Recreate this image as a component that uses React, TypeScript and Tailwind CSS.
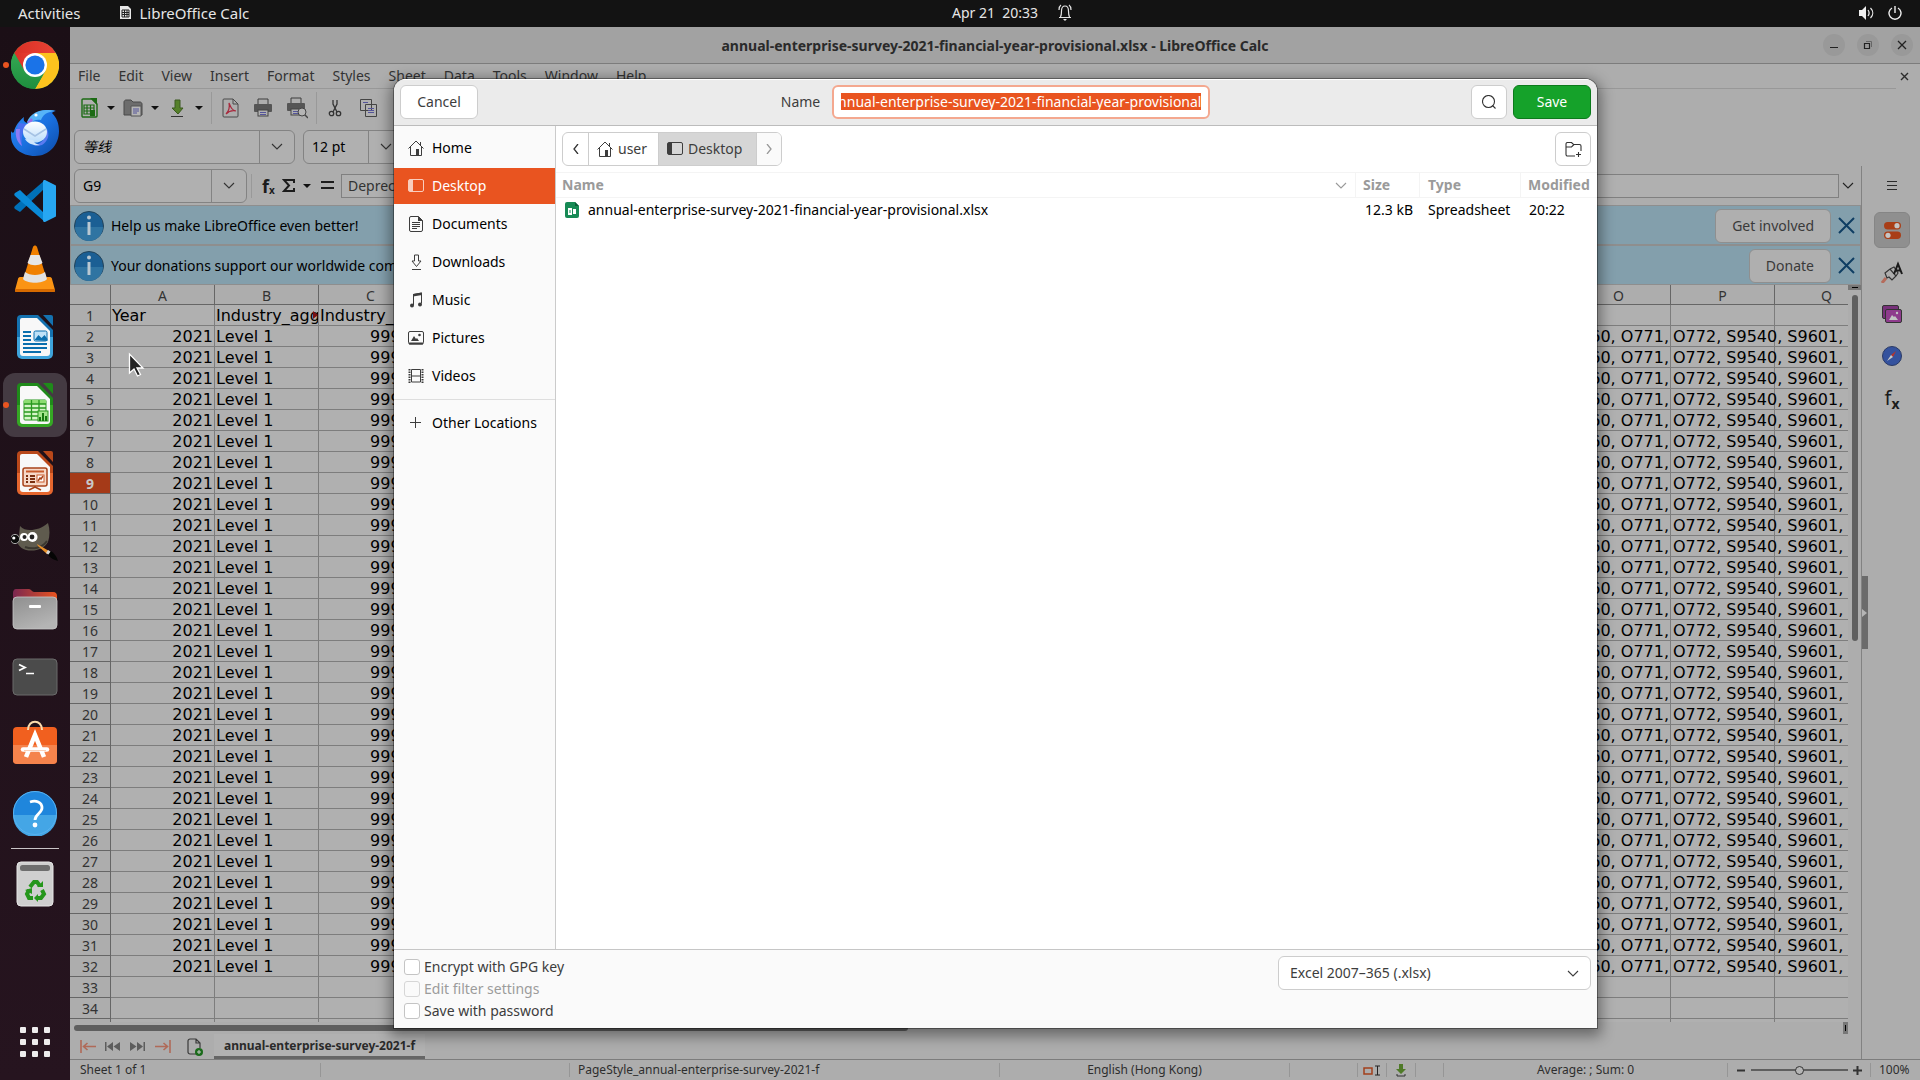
import React, { useEffect, useRef } from 'react';

const FILE_NAME = 'annual-enterprise-survey-2021-financial-year-provisional';

const menus = ['File', 'Edit', 'View', 'Insert', 'Format', 'Styles', 'Sheet', 'Data', 'Tools', 'Window', 'Help'];
const columns = 'ABCDEFGHIJKLMNOPQ'.split('');
const rows = Array.from({ length: 34 }, (_, i) => i + 1);

/* ---------- Dock icons ---------- */

const ChromeIcon = () => (
  <svg width="48" height="48" viewBox="0 0 48 48">
    <defs>
      <linearGradient id="chR" x1="0" y1="0" x2="1" y2="0"><stop offset="0" stopColor="#d93025" /><stop offset="1" stopColor="#ea4335" /></linearGradient>
      <linearGradient id="chG" x1="0" y1="0" x2="0" y2="1"><stop offset="0" stopColor="#34a853" /><stop offset="1" stopColor="#1e8e3e" /></linearGradient>
    </defs>
    <circle cx="24" cy="24" r="24" fill="url(#chG)" />
    <path d="M24 24 3.2 12A24 24 0 0 1 44.8 12z" fill="url(#chR)" />
    <path d="M24 12h20.8A24 24 0 0 1 24 48l10.4-18z" fill="#fcc31e" />
    <path d="M3.2 12 13.6 30 24 24V12z" fill="url(#chR)" />
    <path d="M3.2 12 13.6 30 24 36l8 -2L24 48A24 24 0 0 1 3.2 12z" fill="url(#chG)" />
    <circle cx="24" cy="24" r="12" fill="#fff" />
    <circle cx="24" cy="24" r="9.6" fill="#1a73e8" />
  </svg>
);

const ThunderbirdIcon = () => (
  <svg width="48" height="48" viewBox="0 0 48 48">
    <defs>
      <linearGradient id="tb" x1="0" y1="0" x2="1" y2="1"><stop offset="0" stopColor="#2a8bf2" /><stop offset="0.5" stopColor="#1a71e0" /><stop offset="1" stopColor="#0c4aa8" /></linearGradient>
      <linearGradient id="tbm" x1="0" y1="0" x2="0" y2="1"><stop offset="0" stopColor="#fff" /><stop offset="1" stopColor="#b9dcfb" /></linearGradient>
    </defs>
    <path d="M0 22c1 2 2 2 3 1C4 17 8 12 13 8c-1 3 0 5 3 6C20 6 27 1 36 1c4 0 7 0 9 1-2 0-3 1-4 2 5 5 7 11 7 18 0 14-10 25-24 25S0 38 0 27z" fill="url(#tb)" />
    <path d="M16 13C19 5 27 1 35 1c4 0 7 0 9 1-9 1-12 4-14 9-4-1-8 0-11 4z" fill="#56b4f8" />
    <path d="M8 14c-4 9-3 18 3 23-1-8 0-15 5-22z" fill="#4a6ff0" />
    <path d="M5 20c-1 8 1 13 6 17-2-5-3-10-2-17z" fill="#8d7cf5" />
    <circle cx="25" cy="6" r="1.6" fill="#fff" />
    <path d="M16 13c2-1 3-2 4-4l2 2-3 4z" fill="#9a6ae6" />
    <path d="M36 20c3 6 1 12-5 16-3 1-6 1-9 0 8 0 13-6 14-16z" fill="#5a7bf0" />
    <ellipse cx="24" cy="23" rx="12" ry="10.500" fill="url(#tbm)" />
    <path d="M14 30c3 5 9 7 15 6-5-1-6-3-7-5z" fill="#cfe6fc" />
    <path d="M13 20l11 7 11-7" fill="none" stroke="#a5c2e4" strokeWidth="1.500" />
  </svg>
);

const CodeIcon = () => (
  <svg width="42" height="42" viewBox="0 0 42 42">
    <path d="M31 0l-1 9L6 32 1 29c-1-1-1-2 0-3z" fill="#0070b8" />
    <path d="M31 42l-1-9L6 10l-5 3c-1 1-1 2 0 3z" fill="#0a8ad8" />
    <path d="M31 0l10 5c1 0 1 1 1 2v28c0 1 0 2-1 2l-10 5c-1 0-2 0-2-2V2c0-2 1-2 2-2z" fill="#27a7f2" />
  </svg>
);

const VlcIcon = () => (
  <svg width="42" height="48" viewBox="0 0 42 48">
    <path d="M6 32h30c1 0 2 1 2 2l3 11c0 1 0 2-2 2H3c-2 0-2-1-2-2l3-11c0-1 1-2 2-2z" fill="#fb9414" />
    <path d="M1 44h40v2c0 1-1 1-2 1H3c-1 0-2 0-2-1z" fill="#d66a00" />
    <path d="M9 34C14 20 17 8 19 2c1-2 3-2 4 0 2 6 5 18 10 32-4 5-20 5-24 0z" fill="#f08000" />
    <path d="M16.500 10h9l3 8c-4 3-11 3-15 0z" fill="#e6e6e6" />
    <path d="M11 27c5 4 15 4 20 0l2 7c-4 5-20 5-24 0z" fill="#e2e2e2" />
  </svg>
);

/* Document-shaped LibreOffice icons share the page outline */
const OfficeIcon = ({ id, top, bottom, children }: { id: string; top: string; bottom: string; children: React.ReactNode }) => (
  <svg width="38" height="46" viewBox="0 0 38 46">
    <defs>
      <linearGradient id={id} x1="0" y1="0" x2="0" y2="1"><stop offset="0.5" stopColor={top} /><stop offset="0.51" stopColor={bottom} /></linearGradient>
    </defs>
    <path d="M5 1h17l15 15v24a5 5 0 0 1-5 5H6a5 5 0 0 1-5-5V5a4 4 0 0 1 4-4z" fill={`url(#${id})`} />
    <path d="M6 4h15l13 13v22a3 3 0 0 1-3 3H7a3 3 0 0 1-3-3V6a2 2 0 0 1 2-2z" fill="#f8f8f8" />
    <path d="M27 1h8a2 2 0 0 1 2 2v9z" fill={top} />
    {children}
  </svg>
);

const WriterIcon = () => (
  <OfficeIcon id="wr" top="#1472b0" bottom="#3ea4dc">
    <path d="M7 18h8M7 22h8M7 26h8M7 30h24M7 34h24M7 38h18" stroke="#0b6fae" strokeWidth="2" />
    <rect x="18" y="17" width="13" height="10" rx="1.500" fill="#bfe2f8" stroke="#0b6fae" />
    <path d="M18.500 26l4-5 3 3 3-3 3 4v2z" fill="#0b6fae" />
  </OfficeIcon>
);

const CalcIcon = () => (
  <OfficeIcon id="ca" top="#1f8a1a" bottom="#35a824">
    <rect x="8" y="18" width="22" height="20" rx="1" fill="#d6f5c8" stroke="#28981f" />
    <path d="M8 18h22v4H8z" fill="#8ddc72" />
    <path d="M8 22h22M8 26h22M8 30h22M8 34h22M15.500 18v20M23 18v20" stroke="#28981f" strokeWidth="1.300" />
    <rect x="22" y="29" width="10" height="10" fill="#a4e58c" stroke="#28981f" />
    <path d="M24 39v-4M27 39v-8M30 39v-5" stroke="#167a10" strokeWidth="2" />
  </OfficeIcon>
);

const ImpressIcon = () => (
  <OfficeIcon id="im" top="#b9481a" bottom="#e5662e">
    <rect x="7" y="18" width="24" height="18" rx="2" fill="#f6d9c9" stroke="#a8431a" strokeWidth="1.500" />
    <path d="M10 21.500h18" stroke="#c85a2b" strokeWidth="2" />
    <path d="M10 26h2M10 29h2M10 32h2M14 26h5M14 29h5M14 32h5" stroke="#7a2f10" strokeWidth="2" />
    <rect x="21" y="25" width="7" height="7" fill="#fff" stroke="#c85a2b" />
    <path d="M22 31l2-3 1 1 2-3M19 36v2M19 37l-6 3M19 37l6 3" stroke="#a8431a" strokeWidth="1.500" fill="none" />
  </OfficeIcon>
);

const GimpIcon = () => (
  <svg width="48" height="42" viewBox="0 -3 48 42">
    <path d="M9 3c3 3 6 4 10 4 6 0 12-2 18-7 2 6 2 13 0 19-4 7-13 10-22 8-4-1-6-3-8-6z" fill="#5f5b4e" />
    <path d="M14 24c8 3 17 1 22-6" fill="none" stroke="#3a372f" strokeWidth="2" />
    <circle cx="13" cy="14" r="4" fill="#fff" /><circle cx="13.500" cy="14" r="2" fill="#222" />
    <circle cx="21.500" cy="14" r="5" fill="#fff" /><circle cx="21" cy="14" r="2.400" fill="#222" />
    <circle cx="4" cy="16" r="4.600" fill="#0a0a0a" stroke="#aaa" strokeWidth="1" /><circle cx="2.800" cy="15" r="1.600" fill="#fff" />
    <path d="M26 21l12 7-2 3-9-8z" fill="#e8902a" />
    <path d="M37 27l3 2-2 3-3-2z" fill="#d8d8d8" />
    <path d="M40 28c3 2 6 6 7 10-4-1-8-3-10-6z" fill="#050505" />
  </svg>
);

const FilesIcon = () => (
  <svg width="46" height="42" viewBox="0 0 46 42">
    <defs>
      <linearGradient id="fi" x1="0" x2="1"><stop offset="0" stopColor="#7a2750" /><stop offset="1" stopColor="#e95420" /></linearGradient>
      <linearGradient id="ff" x1="0" y1="0" x2="0.500" y2="1"><stop offset="0" stopColor="#8f8f8f" /><stop offset="1" stopColor="#b4b4b4" /></linearGradient>
    </defs>
    <path d="M4 1h13c2 0 3 3 5 3h19c3 0 4 2 4 4v12H1V5c0-2 1-4 3-4z" fill="url(#fi)" />
    <rect x="1" y="9" width="44" height="32" rx="4" fill="url(#ff)" stroke="#c8c8c8" strokeWidth="0.800" />
    <rect x="17" y="17" width="12" height="3" rx="1" fill="#fff" />
  </svg>
);

const TerminalIcon = () => (
  <svg width="46" height="38" viewBox="0 0 46 38">
    <rect x="1" y="1" width="44" height="36" rx="4" fill="#4b4b4b" stroke="#6b6b6b" />
    <path d="M7 6.500l6 3-6 3" fill="none" stroke="#fff" strokeWidth="1.800" />
    <path d="M14 15.500h8" stroke="#fff" strokeWidth="1.500" />
  </svg>
);

const SoftwareIcon = () => (
  <svg width="46" height="50" viewBox="0 0 46 50">
    <rect x="1" y="7" width="44" height="37" rx="4" fill="#f1601f" />
    <path d="M1 25h44v15a4 4 0 0 1-4 4H5a4 4 0 0 1-4-4z" fill="#f5834c" />
    <path d="M16 10c0-11 14-11 14 0" fill="none" stroke="#fbdcae" strokeWidth="2" />
    <path d="M14 37l9-22 9 22" fill="none" stroke="#fff" strokeWidth="4.500" />
    <path d="M11 29.500h24" stroke="#fff" strokeWidth="4.500" strokeLinecap="round" />
    <path d="M12 30.500h22" stroke="#f9c3a5" strokeWidth="0.800" />
  </svg>
);

const HelpIcon = () => (
  <svg width="46" height="46" viewBox="0 0 46 46">
    <circle cx="23" cy="23" r="22" fill="#1f86dc" />
    <path d="M1 25a22 22 0 0 0 44 0z" fill="#44a6e6" />
    <circle cx="23" cy="23" r="21.500" fill="none" stroke="#59b2ef" />
    <path d="M18 12c6-2 12 0 12 6 0 5-7 6-7 12" fill="none" stroke="#fff" strokeWidth="2.800" />
    <circle cx="23" cy="35" r="2.400" fill="#fff" />
  </svg>
);

const TrashIcon = () => (
  <svg width="38" height="46" viewBox="0 0 38 46">
    <rect x="1" y="1" width="36" height="44" rx="4" fill="#cfcfcf" stroke="#e6e6e6" />
    <rect x="4" y="4" width="30" height="6" rx="2.500" fill="#6e6e6e" />
    <g fill="none" stroke="#25961b" strokeWidth="4">
      <path d="M14 26l4-5h3l3 4" /><path d="M26 29l2 4-3 4h-4" /><path d="M17 37h-4l-2-4 2-4" />
    </g>
    <path d="M21 26h6v-6zM22 33v8l-4-4zM9 29l7-2v6z" fill="#25961b" />
  </svg>
);

const dockItems = [
  { name: 'Google Chrome', icon: ChromeIcon, running: true },
  { name: 'Thunderbird', icon: ThunderbirdIcon },
  { name: 'Visual Studio Code', icon: CodeIcon },
  { name: 'VLC', icon: VlcIcon },
  { name: 'LibreOffice Writer', icon: WriterIcon },
  { name: 'LibreOffice Calc', icon: CalcIcon, running: true, active: true },
  { name: 'LibreOffice Impress', icon: ImpressIcon },
  { name: 'GIMP', icon: GimpIcon },
  { name: 'Files', icon: FilesIcon },
  { name: 'Terminal', icon: TerminalIcon },
  { name: 'Ubuntu Software', icon: SoftwareIcon },
  { name: 'Help', icon: HelpIcon },
];

const DockButton = ({ name, icon: Icon, running, active }: { name: string; icon: () => React.ReactElement; running?: boolean; active?: boolean }) => (
  <button aria-label={name} className="relative h-[68px] w-full flex items-center justify-center shrink-0">
    <span className={`size-16 rounded-xl flex items-center justify-center ${active ? 'bg-[#443a42]' : ''}`}>
      <Icon />
    </span>
    {running && <span className="absolute left-[3px] top-[31px] size-[6px] rounded-full bg-[#e95420]" />}
  </button>
);

const Dock = () => (
  <nav className="w-[70px] shrink-0 bg-linear-to-b from-[#1b0f16] to-[#26141f] flex flex-col pt-1">
    {dockItems.map((item) => <DockButton key={item.name} {...item} />)}
    <div className="h-px my-px mx-[11px] bg-[#c9c5c7] shrink-0" />
    <DockButton name="Trash" icon={TrashIcon} />
    <button aria-label="Show Applications" className="mt-auto mb-[23px] mx-auto grid grid-cols-3 gap-[6px]">
      {Array.from({ length: 9 }, (_, i) => <span key={i} className="size-[6px] rounded-[1px] bg-[#eeeced]" />)}
    </button>
  </nav>
);

/* ---------- Top bar ---------- */

const TopBar = () => (
  <header className="h-[27px] shrink-0 bg-[#131313] text-[#e6e6e6] text-sm leading-6 grid grid-cols-[1fr_auto_1fr] items-center pb-[2px]">
    <div className="flex items-center text-[15px] leading-6">
      <button className="pl-[18px]">Activities</button>
      <button className="ml-[38px] flex items-center gap-2">
        <svg width="13" height="15" viewBox="0 0 13 15">
          <path d="M1 1h8l3 3v10H1z" fill="#e8e8e8" />
          <path d="M3 5h7v7H3zM3 7.500h7M3 9.500h7M5.500 5v7M8 5v7" fill="none" stroke="#222" />
        </svg>
        LibreOffice Calc
      </button>
    </div>
    <button className="pl-[104px] flex items-center gap-5">
      <span className="whitespace-pre">Apr 21  20:33</span>
      <svg width="14" height="17" viewBox="0 0 14 17" fill="none" stroke="#e6e6e6" strokeWidth="1.200">
        <path d="M1 13.500h12M2.500 13c1-2 1-4 1-6 0-3 1-5 3.500-5s3.500 2 3.500 5c0 2 0 4 1 6M1 6c0-2 .5-4 2-5M13 6c0-2-.5-4-2-5" />
        <path d="M5 15h4l-2 2z" fill="#e6e6e6" stroke="none" />
      </svg>
    </button>
    <div className="flex justify-end items-center gap-[14px] pr-[18px]">
      <svg width="15" height="14" viewBox="0 0 15 14" fill="none" stroke="#eee" strokeWidth="1.200">
        <path d="M0 4h3l4-4v14l-4-4H0z" fill="#eee" stroke="none" />
        <path d="M9 4c1.500 2 1.500 4 0 6M11.500 2c3 3 3 7 0 10" />
      </svg>
      <svg width="14" height="14" viewBox="0 0 14 14" fill="none" stroke="#eee" strokeWidth="1.400">
        <path d="M4 2a6 6 0 1 0 6 0M7 0v7" />
      </svg>
    </div>
  </header>
);

/* ---------- Calc window ---------- */

const Chevron = ({ className = '' }: { className?: string }) => (
  <svg className={className} width="12" height="7" viewBox="0 0 12 7" fill="none" stroke="currentColor" strokeWidth="1.100">
    <path d="M1 1l5 5 5-5" />
  </svg>
);

const Caret = () => (
  <svg width="8" height="4" viewBox="0 0 8 4"><path d="M0 0h8L4 4z" fill="#111" /></svg>
);

const PrinterShape = () => (
  <>
    <path d="M5 6V1h10v5" fill="none" stroke="#3c3c3c" />
    <rect x="1" y="6" width="18" height="8" rx="1" fill="#555" />
    <rect x="5" y="12" width="10" height="6" fill="#b0b0b0" stroke="#444" />
    <path d="M7 14.500h6M7 16.500h6" stroke="#55559a" />
  </>
);

const TitleBar = () => (
  <div className="h-[37px] shrink-0 bg-[#a2a2a2] border-b border-[#7c7c7c] grid grid-cols-[1fr_auto_1fr] items-center">
    <span />
    <h1 className="pt-[2px] font-bold text-sm text-[#2a2a2a]">{FILE_NAME}.xlsx - LibreOffice Calc</h1>
    <div className="flex justify-end gap-3 pr-[7px] text-[#222]">
      <button aria-label="Minimize" className="size-[22px] rounded-full bg-[#999] flex items-center justify-center">
        <svg width="10" height="10" viewBox="0 0 10 10"><path d="M1 7.500h8" stroke="currentColor" /></svg>
      </button>
      <button aria-label="Restore" className="size-[22px] rounded-full bg-[#999] flex items-center justify-center">
        <svg width="10" height="10" viewBox="0 0 10 10" fill="none">
          <path d="M1.500 3.500h5v5h-5z" stroke="currentColor" strokeWidth="1.200" /><path d="M3 1.500h5.500V7" stroke="#666" />
        </svg>
      </button>
      <button aria-label="Close" className="size-[22px] rounded-full bg-[#999] flex items-center justify-center">
        <svg width="10" height="10" viewBox="0 0 10 10"><path d="M1 1l8 8M9 1L1 9" stroke="currentColor" strokeWidth="1.300" /></svg>
      </button>
    </div>
  </div>
);

const MenuBar = () => (
  <div className="h-[25px] shrink-0 flex items-stretch">
    <div className="flex-1 flex items-center gap-[2px] border-b border-[#989898] text-sm text-[#333]">
      {menus.map((menu) => <button key={menu} className="px-2">{menu}</button>)}
    </div>
    <button aria-label="Close document" className="w-6 flex items-center pl-1">
      <svg width="9" height="9" viewBox="0 0 9 9"><path d="M1 1l7 7M8 1L1 8" stroke="#2b2b2b" strokeWidth="1.400" /></svg>
    </button>
  </div>
);

const Toolbar = () => (
  <div className="h-[38px] shrink-0 flex items-center pl-[9px]">
    <div className="flex items-center gap-2">
      <button aria-label="New">
        <svg width="20" height="20" viewBox="0 0 20 20">
          <path d="M4 1h9l5 5v12a1 1 0 0 1-1 1H4a1 1 0 0 1-1-1V2a1 1 0 0 1 1-1z" fill="#b0b0b0" stroke="#1c6b14" strokeWidth="1.400" />
          <path d="M11 0h7v7z" fill="#1c6b14" />
          <path d="M5 7h10v9H5zM5 10h10M5 13h10M8 7v9M11.500 7v9" fill="none" stroke="#1c6b14" strokeWidth="1.200" />
          <path d="M11 12h5v6h-5z" fill="#1c6b14" />
        </svg>
      </button>
      <button aria-label="New options"><Caret /></button>
      <button aria-label="Open">
        <svg width="20" height="20" viewBox="0 0 20 20">
          <path d="M1 17V4c0-1 1-2 2-2h5l2 2h7c1 0 2 1 2 2v11z" fill="#6c6c6c" stroke="#484848" />
          <path d="M8 8h10v10H8z" fill="#b5b5b5" stroke="#555" />
          <path d="M10 11h6M10 13h6M10 15h4" stroke="#55559a" />
        </svg>
      </button>
      <button aria-label="Open options"><Caret /></button>
      <button aria-label="Save">
        <svg width="20" height="20" viewBox="0 0 20 20">
          <path d="M8 2h5v8h3l-5 6-6-6h3z" fill="#55802a" stroke="#3c5a20" />
          <path d="M4 18.500h12" stroke="#333" />
        </svg>
      </button>
      <button aria-label="Save options"><Caret /></button>
    </div>
    <div className="w-px h-8 bg-[#999] mx-2" />
    <div className="flex items-center gap-[13px]">
      <button aria-label="Export as PDF">
        <svg width="20" height="20" viewBox="0 0 20 20" fill="none">
          <path d="M4 1h9l5 5v12a1 1 0 0 1-1 1H4a1 1 0 0 1-1-1V2a1 1 0 0 1 1-1zM13 1v5h5" stroke="#4a4a4a" />
          <path d="M9 5c2 5 3 7 7 8-4-1-7 0-10 3 3-3 4-6 3-11z" stroke="#a8283c" strokeWidth="1.200" />
        </svg>
      </button>
      <button aria-label="Print"><svg width="20" height="20" viewBox="0 0 20 20"><PrinterShape /></svg></button>
      <button aria-label="Print Preview">
        <svg width="22" height="22" viewBox="0 0 22 22">
          <PrinterShape />
          <circle cx="16" cy="15" r="4" fill="#b5b5b5" stroke="#444" /><path d="M19 18l3 3" stroke="#444" strokeWidth="1.400" />
        </svg>
      </button>
    </div>
    <div className="w-px h-8 bg-[#999] mx-2" />
    <div className="flex items-center gap-[13px]">
      <button aria-label="Cut">
        <svg width="20" height="20" viewBox="0 0 20 20" fill="none" stroke="#333" strokeWidth="1.300">
          <path d="M8 2v4l4 8M12 2v4l-4 8" /><circle cx="6.500" cy="15.500" r="2.200" /><circle cx="13.500" cy="15.500" r="2.200" />
        </svg>
      </button>
      <button aria-label="Copy">
        <svg width="20" height="20" viewBox="0 0 20 20" fill="#b0b0b0" stroke="#444">
          <path d="M2.500 1.500h11v11h-11zM7.500 6.500h11v12h-11z" />
          <path d="M10 10.500h6M10 12.500h6M10 14.500h6M5 4.500h5" stroke="#55559a" />
        </svg>
      </button>
    </div>
  </div>
);

const ComboBox = ({ label, value, className }: { label: string; value: string; className: string }) => (
  <div className={`h-[34px] flex border border-[#838383] rounded-md bg-[#b0b0b0] text-sm text-black ${className}`}>
    <input aria-label={label} defaultValue={value} className="flex-1 min-w-0 pl-2 outline-none" />
    <button aria-label={`${label} list`} className="w-[35px] border-l border-[#838383] flex items-center justify-center text-[#333]">
      <Chevron />
    </button>
  </div>
);

const FormulaBar = () => (
  <div className="h-[39px] shrink-0 flex items-center pl-1">
    <ComboBox label="Name Box" value="G9" className="w-[173px]" />
    <div className="w-px h-6 bg-[#999] ml-1 mr-[10px]" />
    <button aria-label="Function Wizard" className="w-4 flex items-end font-bold text-[#1c1c1c]">
      <span className="text-lg leading-5">f</span>
      <span className="text-[10px] leading-3">x</span>
    </button>
    <button aria-label="Select Function" className="ml-1 flex items-center gap-2">
      <svg width="13" height="13" viewBox="0 0 13 13"><path d="M12 4V1H2l5 5.500L2 12h10V9" fill="none" stroke="#1c1c1c" strokeWidth="2" /></svg>
      <Caret />
    </button>
    <button aria-label="Formula" className="ml-[10px] mr-[7px]">
      <svg width="13" height="9" viewBox="0 0 13 9"><path d="M0 1h13M0 7h13" stroke="#1c1c1c" strokeWidth="2" /></svg>
    </button>
    <input aria-label="Input line" defaultValue="Depreciation" className="h-6 flex-1 min-w-0 border border-[#808080] bg-[#b0b0b0] px-[6px] text-sm text-[#333]" />
    <button aria-label="Expand Formula Bar" className="w-[22px] flex items-center pl-[3px] text-[#222]"><Chevron /></button>
  </div>
);

const InfoBar = ({ text, action }: { text: string; action: string }) => (
  <div className="h-10 shrink-0 flex items-center bg-[#839fac] border border-[#8e8e8e] pt-px pl-[3px] pr-[5px] text-sm">
    <svg width="30" height="30" viewBox="0 0 30 30">
      <circle cx="15" cy="15" r="14.500" fill="#1b5f94" stroke="#24445a" />
      <path d="M1 16a14 14 0 0 0 28 0z" fill="#2f74a2" />
      <path d="M15 11v13" stroke="#b9c8d2" strokeWidth="3" /><circle cx="15" cy="6.500" r="2" fill="#b9c8d2" />
    </svg>
    <span className="ml-[7px] flex-1 text-black">{text}</span>
    <button className="h-[34px] px-4 rounded-md bg-[#afafaf] border border-[#8f8f8f] text-[#3a3a3a]">{action}</button>
    <button aria-label="Close infobar" className="ml-[7px]">
      <svg width="17" height="17" viewBox="0 0 17 17"><path d="M1 1l15 15M16 1L1 16" stroke="#0f3e63" strokeWidth="2" /></svg>
    </button>
  </div>
);

const cellContent = (col: string, row: number) => {
  if (row === 1) {
    if (col === 'A') return 'Year';
    if (col === 'B') return 'Industry_aggregation_NZSIOC';
    if (col === 'C') return 'Industry_code_NZSIOC';
    return '';
  }
  if (row > 32) return '';
  if (col === 'A') return '2021';
  if (col === 'B') return 'Level 1';
  if (col === 'C') return '99999';
  if (col === 'O') return '60, O771,';
  if (col === 'P') return 'O772, S9540, S9601, S9602';
  return '';
};

const cellAlign = (col: string, row: number) => {
  if (col === 'P') return 'pl-[2px]';
  if (row > 1 && (col === 'A' || col === 'C' || col === 'O')) return 'text-right overflow-hidden pr-px';
  return 'overflow-hidden pl-px';
};

const Sheet = () => (
  <div className="flex-1 min-w-0 overflow-hidden bg-[#b0b0b0]">
    <table className="w-[1809px] table-fixed border-separate border-spacing-0">
      <thead>
        <tr className="h-5 text-sm text-[#333]">
          <th className="w-[41px] bg-[#adadad] border-r border-b border-[#666]" aria-label="Select all" />
          {columns.map((col) => (
            <th key={col} scope="col" className="w-[104px] p-0 font-normal bg-[#adadad] border-r border-b border-[#666]">
              <div className="h-[19px] leading-[21px]">{col}</div>
            </th>
          ))}
        </tr>
      </thead>
      <tbody>
        {rows.map((row) => (
          <tr key={row} className="h-[21px]">
            <th
              scope="row"
              className={`p-0 text-sm border-r border-b border-[#666] ${
                row === 9 ? 'bg-[#a53a18] text-[#c8c8c8] font-bold' : 'bg-[#adadad] text-[#333] font-normal'
              }`}
            >
              <div className="h-5 leading-[22px]">{row}</div>
            </th>
            {columns.map((col) => (
              <td key={col} className="p-0 border-r border-b border-[#7d7d7d] text-black text-base whitespace-nowrap font-['DejaVu_Sans',sans-serif]">
                <div className={`h-5 leading-[22px] ${cellAlign(col, row)} ${col === 'B' && row === 1 ? 'relative' : ''}`}>
                  {cellContent(col, row)}
                  {col === 'B' && row === 1 && (
                    <svg className="absolute right-0 top-[6px]" width="5" height="8" viewBox="0 0 5 8"><path d="M0 0l5 4-5 4z" fill="#7a1010" /></svg>
                  )}
                </div>
              </td>
            ))}
          </tr>
        ))}
        <tr className="h-4" aria-hidden="true">
          <th className="border-r border-[#666] bg-[#adadad]" />
          {columns.map((col) => <td key={col} className="border-r border-[#7d7d7d]" />)}
        </tr>
      </tbody>
    </table>
  </div>
);

const SheetTabs = () => (
  <div className="h-[25px] shrink-0 flex items-stretch">
    <div className="flex items-center gap-[9px] pl-[10px]">
      <button aria-label="First sheet"><svg width="16" height="13" viewBox="0 0 16 13" fill="none" stroke="#b06a58" strokeWidth="1.600"><path d="M1 0v13M16 6.500H4M7.500 3l-4 3.500 4 3.500" /></svg></button>
      <button aria-label="Previous sheet" className="w-4"><svg width="15" height="9" viewBox="0 0 15 9" fill="#5c5c5c"><path d="M0 0h1.500v9H0zM8 0v9L2 4.500zM15 0v9L8.500 4.500z" /></svg></button>
      <button aria-label="Next sheet" className="w-4"><svg width="15" height="9" viewBox="0 0 15 9" fill="#5c5c5c"><path d="M13.500 0H15v9h-1.500zM0 0l6.500 4.500L0 9zM7 0l6 4.500L7 9z" /></svg></button>
      <button aria-label="Last sheet"><svg width="16" height="13" viewBox="0 0 16 13" fill="none" stroke="#b06a58" strokeWidth="1.600"><path d="M15 0v13M0 6.500h12M8.500 3l4 3.500-4 3.500" /></svg></button>
    </div>
    <button aria-label="Insert sheet" className="ml-4 mr-[11px]">
      <svg width="16" height="18" viewBox="0 0 16 18" fill="none">
        <path d="M9 16H3a2 2 0 0 1-2-2V3a2 2 0 0 1 2-2h6l4 4v5M9 1v4h4" stroke="#3a3a3a" strokeWidth="1.200" />
        <circle cx="12" cy="14" r="4" fill="#1a6b1a" /><path d="M12 12v4M10 14h4" stroke="#c8c8c8" />
      </svg>
    </button>
    <button className="px-[10px] pt-[2px] border-b-[3px] border-[#666] bg-[#b1b1b1] font-bold text-xs text-[#2a2a2a]">annual-enterprise-survey-2021-f</button>
  </div>
);

const SideBar = () => (
  <aside className="w-[59px] shrink-0 border-l border-[#828282] flex items-start">
    <button aria-label="Hide sidebar" className="self-center h-[73px] w-[6px] bg-[#6b6b6b] flex items-center">
      <svg width="5" height="8" viewBox="0 0 5 8"><path d="M0 0l5 4-5 4z" fill="#b5b5b5" /></svg>
    </button>
    <div className="flex-1 flex flex-col items-center gap-[6px] pr-1">
      <button aria-label="Sidebar settings" className="w-9 h-10 flex items-center justify-center">
        <svg width="10" height="10" viewBox="0 0 10 10"><path d="M0 .5h10M0 4.500h10M0 8.500h10" stroke="#2b2b2b" /></svg>
      </button>
      <button aria-label="Properties" className="size-9 rounded-md bg-[#8f8f8f] border border-[#858585] flex items-center justify-center">
        <svg width="17" height="17" viewBox="0 0 17 17">
          <rect x="0" y="0" width="17" height="7.500" rx="3.700" fill="#a93e17" /><circle cx="13" cy="3.700" r="2.600" fill="#c5c5c5" />
          <rect x="0" y="9.500" width="17" height="7.500" rx="3.700" fill="#a93e17" /><circle cx="4" cy="13.300" r="2.600" fill="#c5c5c5" />
        </svg>
      </button>
      <button aria-label="Styles" className="size-9 flex items-center justify-center">
        <svg width="22" height="22" viewBox="0 -2 22 22" fill="none">
          <path d="M1 20l4-5" stroke="#b56c5c" strokeWidth="3" />
          <path d="M4 10l5-4 6 7-4 4-3-3-2 1zM9 6l4-2 4 6-2 3" stroke="#333" strokeWidth="1.200" />
          <path d="M13 11l4-10 4 10M14 7.500h6" stroke="#1b1b1b" strokeWidth="2" />
        </svg>
      </button>
      <button aria-label="Gallery" className="size-9 flex items-center justify-center">
        <svg width="20" height="18" viewBox="0 0 20 18">
          <rect x="0.500" y="0.500" width="16" height="13" rx="1.500" fill="#77317a" stroke="#333" />
          <rect x="3.500" y="4.500" width="16" height="13" rx="1.500" fill="#8e3b8c" stroke="#333" />
          <path d="M7 15l3-5 2 2 1-1 3 4z" fill="#c3c3c3" /><circle cx="15" cy="8" r="1.200" fill="#c3c3c3" />
        </svg>
      </button>
      <button aria-label="Navigator" className="size-9 flex items-center justify-center">
        <svg width="20" height="20" viewBox="0 0 20 20">
          <circle cx="10" cy="10" r="9.500" fill="#34529e" stroke="#2a3a66" />
          <path d="M14 5L9 9l2 2z" fill="#b5342c" /><path d="M5 15l4-6 2 2z" fill="#c9c9c9" />
        </svg>
      </button>
      <button aria-label="Functions" className="size-9 flex items-center justify-center text-[#1c1c1c]">
        <span className="text-xl leading-5">f</span>
        <span className="self-end pb-[6px] text-sm leading-3 font-bold">x</span>
      </button>
    </div>
  </aside>
);

const StatusBar = () => (
  <footer className="h-[21px] shrink-0 border-t border-[#7c7c7c] py-[3px] flex text-xs leading-[14px] text-[#2e2e2e] *:border-r *:border-[#969696] *:flex *:items-center">
    <div className="w-[251px] pl-[10px]">Sheet 1 of 1</div>
    <div className="w-[249px]" />
    <div className="flex-1 pl-2">PageStyle_annual-enterprise-survey-2021-f</div>
    <div className="w-[290px] justify-center">English (Hong Kong)</div>
    <div className="w-[68px]" />
    <div className="w-[29px] justify-center">
      <svg width="18" height="11" viewBox="0 0 18 11" fill="none"><path d="M1 3h8v6H1z" stroke="#a3401c" strokeWidth="1.500" /><path d="M12 1h5M12 10h5M14.500 1v9" stroke="#222" /></svg>
    </div>
    <div className="w-[29px] justify-center">
      <svg width="10" height="13" viewBox="0 0 10 13"><path d="M3 0h4v5h3l-5 5-5-5h3z" fill="#4f7a28" /><path d="M1 10v2h8v-2" fill="none" stroke="#333" /></svg>
    </div>
    <div className="w-[28px]" />
    <div className="w-[284px] justify-center">Average: ; Sum: 0</div>
    <div className="w-[143px] justify-center gap-[5px]">
      <button aria-label="Zoom out"><svg width="9" height="9" viewBox="0 0 9 9"><path d="M0 4.500h8" stroke="#333" strokeWidth="2" /></svg></button>
      <input
        type="range"
        aria-label="Zoom"
        defaultValue="50"
        className="w-[97px] h-[2px] appearance-none bg-[#5f5f5f] [&::-webkit-slider-thumb]:appearance-none [&::-webkit-slider-thumb]:size-[9px] [&::-webkit-slider-thumb]:rounded-full [&::-webkit-slider-thumb]:border [&::-webkit-slider-thumb]:border-[#333] [&::-webkit-slider-thumb]:bg-[#b5b5b5]"
      />
      <button aria-label="Zoom in"><svg width="9" height="9" viewBox="0 0 9 9"><path d="M0 4.500h9M4.500 0v9" stroke="#333" strokeWidth="2" /></svg></button>
    </div>
    <div className="w-[49px] pl-2 border-r-0!">100%</div>
  </footer>
);

/* ---------- Save dialog ---------- */

const HomeIcon = () => (
  <svg width="16" height="16" viewBox="0 0 16 16" fill="none" stroke="currentColor">
    <path d="M.5 8.500L8 1l7.500 7.500M2.500 7v8.500h11V7M12.500 5.500V2" /><path d="M8 9h3v6.500H8z" fill="currentColor" stroke="none" />
  </svg>
);
const DesktopIcon = () => (
  <svg width="16" height="14" viewBox="0 0 16 14" fill="none" stroke="currentColor">
    <rect x="0.500" y="0.500" width="15" height="12" rx="1.500" /><path d="M1 1h4v11H1z" fill="currentColor" stroke="none" />
  </svg>
);
const DocumentsIcon = () => (
  <svg width="16" height="16" viewBox="0 0 16 16" fill="none" stroke="currentColor">
    <path d="M10.500.5H3A1.500 1.500 0 0 0 1.500 2v12A1.500 1.500 0 0 0 3 15.500h10a1.500 1.500 0 0 0 1.500-1.500V4.500z" />
    <path d="M10 0l5 5h-5z" fill="currentColor" stroke="none" /><path d="M4 6.500h8M4 8.500h8M4 10.500h8M4 12.500h5" />
  </svg>
);
const DownloadsIcon = () => (
  <svg width="16" height="16" viewBox="0 0 16 16" fill="none" stroke="currentColor">
    <path d="M6.500 1h4v6h2.500l-4.500 5.500L4 7h2.500zM4 15.500h9" />
  </svg>
);
const MusicIcon = () => (
  <svg width="16" height="16" viewBox="0 0 16 16" fill="none" stroke="currentColor">
    <path d="M5.500 13V2.500l8-1.500v10.500" /><path d="M5 2l9-1.500V3L5 4.500z" fill="currentColor" stroke="none" />
    <circle cx="4" cy="13.500" r="2" fill="currentColor" stroke="none" /><circle cx="12" cy="12.500" r="2" fill="currentColor" stroke="none" />
  </svg>
);
const PicturesIcon = () => (
  <svg width="16" height="14" viewBox="0 0 16 14" fill="none" stroke="currentColor">
    <rect x="0.500" y="0.500" width="15" height="12.500" rx="1.500" />
    <path d="M3 10l3-5 2 3 1-1 2 3z" fill="currentColor" stroke="none" /><circle cx="11.500" cy="4" r="1.300" fill="currentColor" stroke="none" />
    <path d="M1 12.500h14" strokeWidth="2" />
  </svg>
);
const VideosIcon = () => (
  <svg width="16" height="14" viewBox="0 0 16 14" fill="none" stroke="currentColor">
    <path d="M3.500.5h9v12.500h-9zM3.500 7h9" /><path d="M1.500 0v14M14.500 0v14" strokeWidth="2" strokeDasharray="1.500 1" />
  </svg>
);

const places = [
  { name: 'Home', icon: HomeIcon },
  { name: 'Desktop', icon: DesktopIcon, selected: true },
  { name: 'Documents', icon: DocumentsIcon },
  { name: 'Downloads', icon: DownloadsIcon },
  { name: 'Music', icon: MusicIcon },
  { name: 'Pictures', icon: PicturesIcon },
  { name: 'Videos', icon: VideosIcon },
];

const options = [
  { id: 'encrypt', label: 'Encrypt with GPG key' },
  { id: 'filter', label: 'Edit filter settings', disabled: true },
  { id: 'password', label: 'Save with password' },
];

const SaveDialog = () => {
  const nameRef = useRef<HTMLInputElement>(null);

  // keep the end of a long file name in view
  useEffect(() => {
    if (nameRef.current) nameRef.current.scrollLeft = nameRef.current.scrollWidth;
  }, []);

  return (
    <div
      role="dialog"
      aria-label="Save"
      className="absolute left-[324px] right-[323px] top-[52px] bottom-[52px] flex flex-col bg-white rounded-t-xl overflow-hidden text-sm text-[#3d3d3d] shadow-[0_0_0_1px_rgba(0,0,0,0.35),0_4px_14px_4px_rgba(0,0,0,0.4)]"
    >
      <div className="h-[47px] shrink-0 bg-[#ebebeb] border-t border-b border-t-white border-b-[#bcbcbc] grid grid-cols-[1fr_auto_1fr] items-center px-[6px] pb-[2px]">
        <button className="w-[78px] h-[34px] bg-white border border-[#cdcdcd] rounded-md">Cancel</button>
        <div className="flex items-center gap-3">
          <label htmlFor="file-name">Name</label>
          <div className="w-[378px] h-[34px] bg-white border-2 border-[#f4a88f] rounded-md flex items-center px-[7px]">
            <input id="file-name" ref={nameRef} defaultValue={FILE_NAME} className="w-full h-[17px] bg-[#e95420] text-white outline-none" />
          </div>
        </div>
        <div className="flex items-center justify-end gap-[6px]">
          <button aria-label="Search" className="w-9 h-[34px] bg-white border border-[#cdcdcd] rounded-md flex items-center justify-center">
            <svg width="14" height="14" viewBox="0 0 14 14" fill="none" stroke="#333" strokeWidth="1.100"><circle cx="6.500" cy="6.500" r="6" /><path d="M10.500 10.500l3 3" /></svg>
          </button>
          <button className="w-[78px] h-[34px] bg-[#15a22a] border border-[#0c7a1c] rounded-md text-white">Save</button>
        </div>
      </div>

      <div className="flex-1 min-h-0 flex">
        <nav className="w-[162px] shrink-0 bg-[#fafafa] border-r border-[#cbcbcb] pt-1 text-black">
          <ul className="flex flex-col gap-[2px]">
            {places.map(({ name, icon: Icon, selected }) => (
              <li key={name}>
                <a href="#" className={`h-9 flex items-center gap-2 pl-[14px] ${selected ? 'bg-[#e95420] text-white' : ''}`}>
                  <span className={selected ? 'text-[#f9cdbd]' : 'text-[#3d3d3d]'}><Icon /></span>
                  {name}
                </a>
              </li>
            ))}
          </ul>
          <div className="h-px bg-[#dedede] mt-[5px] mb-[5px]" />
          <a href="#" className="h-9 flex items-center gap-2 pl-[14px]">
            <svg width="16" height="16" viewBox="0 0 16 16" stroke="#3d3d3d"><path d="M2 7.500h11M7.500 2v11" /></svg>
            Other Locations
          </a>
        </nav>

        <div className="flex-1 min-w-0 flex flex-col">
          <div className="h-[46px] shrink-0 flex items-center justify-between pl-[6px] pr-[6px]">
            <div className="h-[34px] flex border border-[#cdcdcd] rounded-md overflow-hidden *:flex *:items-center">
              <button aria-label="Back" className="w-[26px] justify-center border-r border-[#cdcdcd]">
                <svg width="6" height="10" viewBox="0 0 6 10" fill="none" stroke="#333" strokeWidth="1.300"><path d="M5 0L1 5l4 5" /></svg>
              </button>
              <button className="w-[70px] gap-[5px] pl-2 border-r border-[#cdcdcd]"><HomeIcon />user</button>
              <button className="w-[98px] gap-[5px] pl-2 bg-[#d6d6d6] border-r border-[#cdcdcd]"><DesktopIcon />Desktop</button>
              <button aria-label="Forward" className="w-6 justify-center bg-[#fafafa]">
                <svg width="6" height="10" viewBox="0 0 6 10" fill="none" stroke="#999" strokeWidth="1.300"><path d="M1 0l4 5-4 5" /></svg>
              </button>
            </div>
            <button aria-label="Create Folder" className="w-9 h-[34px] border border-[#cdcdcd] rounded-md flex items-center justify-center">
              <svg width="17" height="15" viewBox="0 0 17 15" fill="none" stroke="#333" strokeWidth="1.100">
                <path d="M10 14H2.500A1.500 1.500 0 0 1 1 12.500V2A1.500 1.500 0 0 1 2.500.5h4l2 2h6A1.500 1.500 0 0 1 16 4v5M1 5h5.500L9 2.500M13.500 10v5M11 12.500h5" />
              </svg>
            </button>
          </div>
          <table className="w-full table-fixed border-separate border-spacing-0">
            <thead>
              <tr className="h-[26px] text-left text-[#9a9a9a] *:font-bold *:border-y *:border-[#f4f4f4]">
                <th className="p-0 pl-[6px] border-r">
                  <div className="flex items-center justify-between pr-2">Name<Chevron /></div>
                </th>
                <th className="w-16 p-0 pl-[7px] border-r">Size</th>
                <th className="w-[101px] p-0 pl-2 border-r">Type</th>
                <th className="w-[76px] p-0 pl-[7px]">Modified</th>
              </tr>
            </thead>
            <tbody>
              <tr className="h-6 text-black">
                <td className="p-0 pl-[9px]">
                  <div className="flex items-center gap-[9px]">
                    <svg width="14" height="16" viewBox="0 0 14 16">
                      <path d="M2 0h8l4 4v10a2 2 0 0 1-2 2H2a2 2 0 0 1-2-2V2a2 2 0 0 1 2-2z" fill="#178a55" />
                      <path d="M10 0l4 4h-4z" fill="#0b5c37" />
                      <path d="M3 6h4v7H3zM8 7h3v5H8z" fill="#fff" /><path d="M4.500 8h1v3h-1z" fill="#178a55" />
                    </svg>
                    {FILE_NAME}.xlsx
                  </div>
                </td>
                <td className="p-0 pr-[7px] text-right">12.3 kB</td>
                <td className="p-0 pl-2">Spreadsheet</td>
                <td className="p-0 pl-2">20:22</td>
              </tr>
            </tbody>
          </table>
        </div>
      </div>

      <div className="h-[79px] shrink-0 bg-[#fafafa] border-t border-[#c6c6c6] flex items-start justify-between pl-[10px] pr-[6px] pt-[6px]">
        <div className="flex flex-col">
          {options.map((option) => (
            <div key={option.id} className="h-[22px] flex items-center gap-1">
              <input
                id={option.id}
                type="checkbox"
                disabled={option.disabled}
                className="size-4 appearance-none bg-white border border-[#c4c4c4] rounded-[3px] disabled:border-[#d6d6d6] disabled:bg-[#fafafa]"
              />
              <label htmlFor={option.id} className={option.disabled ? 'text-[#9c9c9c]' : ''}>{option.label}</label>
            </div>
          ))}
        </div>
        <div className="relative">
          <select aria-label="File type" className="w-[313px] h-[34px] appearance-none bg-white border border-[#cdcdcd] rounded-md pl-[11px]">
            <option>Excel 2007–365 (.xlsx)</option>
          </select>
          <Chevron className="absolute right-3 top-[14px] pointer-events-none" />
        </div>
      </div>
    </div>
  );
};

export default function App() {
  return (
    <div className="h-screen flex flex-col overflow-hidden bg-[#131313] font-['Noto_Sans','Noto_Sans_CJK_SC',sans-serif]">
      <TopBar />
      <div className="flex-1 min-h-0 flex">
        <Dock />
        <main className="relative flex-1 min-w-0 flex flex-col bg-[#adadad]">
          <TitleBar />
          <MenuBar />
          <Toolbar />
          <div className="h-[39px] shrink-0 flex items-center gap-2 pl-1">
            <ComboBox label="Font Name" value="等线" className="w-[221px] italic" />
            <ComboBox label="Font Size" value="12 pt" className="w-[101px]" />
          </div>
          <div className="flex-1 min-h-0 flex">
            <div className="flex-1 min-w-0 flex flex-col">
              <FormulaBar />
              <InfoBar text="Help us make LibreOffice even better!" action="Get involved" />
              <InfoBar text="Your donations support our worldwide community." action="Donate" />
              <div className="flex-1 min-h-0 flex">
                <Sheet />
                <div className="w-[13px] shrink-0 flex flex-col items-center">
                  <div className="w-full h-[5px] bg-[#777] flex items-center justify-center"><span className="w-[6px] h-px bg-black" /></div>
                  <div className="mt-[5px] w-[6px] h-[47%] rounded-full bg-[#5f5f5f]" />
                </div>
              </div>
              <div className="h-3 shrink-0 flex items-center justify-between pl-1 pr-[13px]">
                <div className="w-[47%] h-[6px] rounded-full bg-[#5f5f5f]" />
                <div className="w-[5px] h-3 bg-[#777] flex items-center justify-center"><span className="w-px h-[6px] bg-black" /></div>
              </div>
              <SheetTabs />
            </div>
            <SideBar />
          </div>
          <StatusBar />
          <SaveDialog />
          {/* Mouse pointer */}
          <svg className="absolute left-[58px] top-[325px]" width="18" height="26" viewBox="0 0 18 26">
            <path d="M1.500 2v19l4.500-4 3.500 7 3-1.500-3.500-6.500h6z" fill="#222" stroke="#fff" strokeWidth="1.300" />
          </svg>
        </main>
      </div>
    </div>
  );
}
